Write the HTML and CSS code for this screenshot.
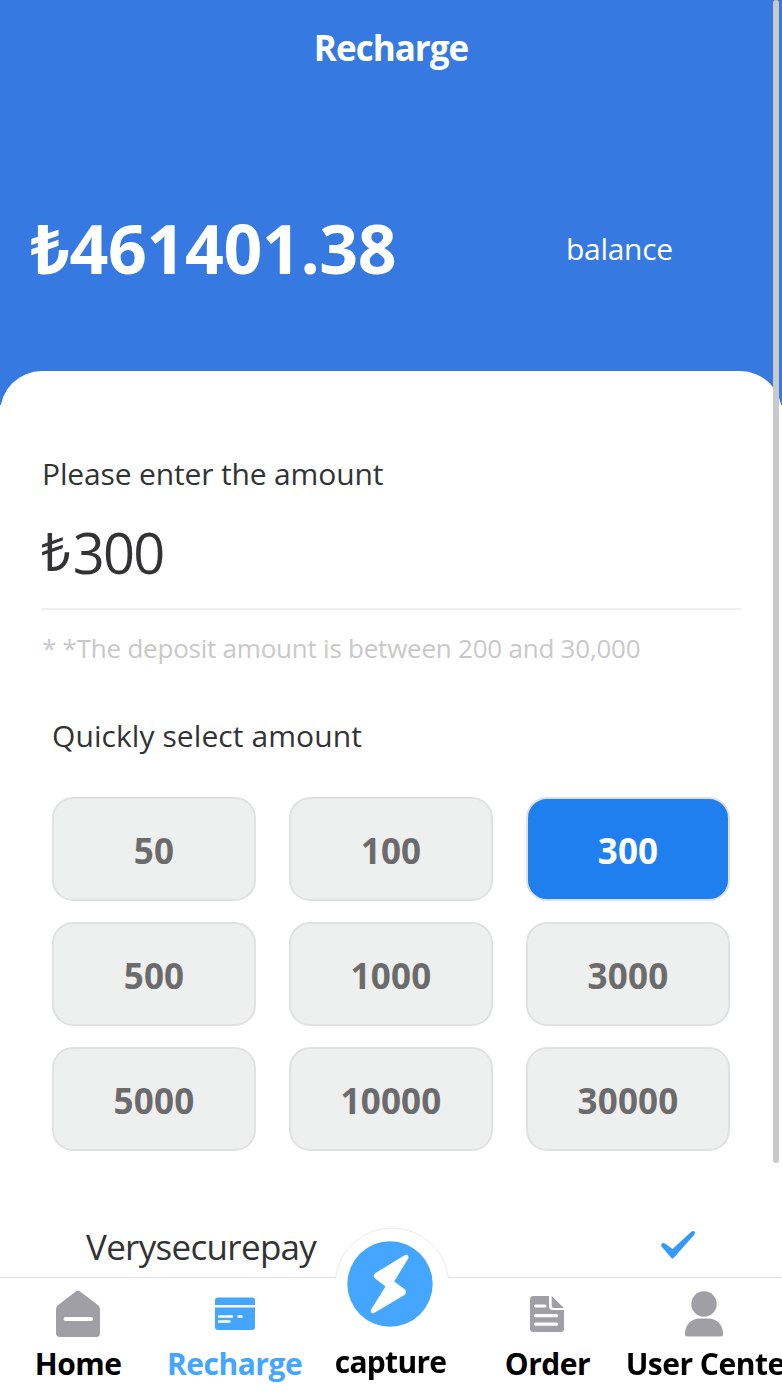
FILE: index.html
```html
<!DOCTYPE html>
<html lang="en">
<head>
  <meta charset="UTF-8">
  <title>Recharge</title>
  <link rel="stylesheet" href="styles.css">
</head>
<body>

  <div class="page">

    <div class="header">
      <h1 class="title">Recharge</h1>
      <div class="wallet">
        <span class="money">₺461401.38</span>
        <span class="wallet-label">balance</span>
      </div>
    </div>

    <div class="card">
      <p class="label">Please enter the amount</p>
      <div class="amount"><span class="currency">₺</span><span class="value">300</span></div>
      <p class="note">* *The deposit amount is between 200 and 30,000</p>

      <p class="quick-label">Quickly select amount</p>
      <div class="quick">
        <div class="option">50</div>
        <div class="option">100</div>
        <div class="option active">300</div>
        <div class="option">500</div>
        <div class="option">1000</div>
        <div class="option">3000</div>
        <div class="option">5000</div>
        <div class="option">10000</div>
        <div class="option">30000</div>
      </div>

      <div class="channel">
        <span class="channel-name">Verysecurepay</span>
        <svg class="check" width="36" height="30" viewBox="0 0 36 30">
          <path d="M1 14 Q2 11 5 12.500 L12.500 18 L31 1 Q34 -1 35 1.500 L34.500 3.500 L14 26.500 Q12.500 28.500 11 26.500 L1.500 15.500 Z" fill="#3499fb"/>
        </svg>
      </div>
    </div>

  </div>

  <div class="scrollbar"></div>

  <div class="tabbar">
    <svg class="bump" width="116" height="52" viewBox="0 0 116 52">
      <path d="M1 52 L1.500 50.500 A57 57 0 0 1 114.500 50.500 L115 52" fill="#fff" stroke="#e9e9e9" stroke-width="1"/>
    </svg>

    <div class="tab">
      <svg class="icon" width="48" height="48" viewBox="0 0 48 48">
        <path d="M21.500 1.800 Q24 -0.200 26.500 1.800 L44.500 15.500 Q46 17 46 19 V43 Q46 47 42 47 H6 Q2 47 2 43 V19 Q2 17 3.500 15.500 Z" fill="#a19fa6"/>
        <path d="M11.500 29 H37" stroke="#fff" stroke-width="4" stroke-linecap="round"/>
      </svg>
      <span class="tab-name">Home</span>
    </div>

    <div class="tab selected">
      <svg class="icon" width="48" height="48" viewBox="0 0 48 48">
        <path d="M4 15 V10.500 Q4 7.500 7 7.500 H41 Q44 7.500 44 10.500 V15 Z" fill="#45a6ff"/>
        <path d="M4 17.500 H44 V37 Q44 40 41 40 H7 Q4 40 4 37 Z" fill="#45a6ff"/>
        <path d="M8 26.500 H21 M27.500 26.500 H30.500 M8 31.500 H18.500" stroke="#fff" stroke-width="2.400" stroke-linecap="round"/>
      </svg>
      <span class="tab-name">Recharge</span>
    </div>

    <div class="tab middle">
      <svg class="bolt" width="86" height="86" viewBox="0 0 86 86">
        <circle cx="43" cy="43" r="42.700" fill="#45a6ff"/>
        <path d="M58 14 Q61.500 12.500 61.500 17 L47.200 40.500 L58 48.500 Q60.500 51 57.500 54 L27 72 Q23.500 73 23.800 69 L38.500 45.500 L27.500 37 Q25.500 34 28.500 32 Z" fill="#fff"/>
      </svg>
      <span class="tab-name">capture</span>
    </div>

    <div class="tab">
      <svg class="icon" width="48" height="48" viewBox="0 0 48 48">
        <path d="M10.500 6 H26 V16 Q26 20 30 20 H41 V38.500 Q41 42 37.500 42 H10.500 Q7 42 7 38.500 V9.500 Q7 6 10.500 6 Z" fill="#a19fa6"/>
        <path d="M28.700 6 L41 18 H30.500 Q28.700 18 28.700 16 Z" fill="#a19fa6"/>
        <path d="M12.500 16 H22 M12.500 25.700 H33.500 M12.500 34.200 H33.500" stroke="#fff" stroke-width="3.200" stroke-linecap="round"/>
      </svg>
      <span class="tab-name">Order</span>
    </div>

    <div class="tab">
      <svg class="icon" width="48" height="48" viewBox="0 0 48 48">
        <circle cx="24" cy="14" r="12.700" fill="#a19fa6"/>
        <path d="M5 44 C5 34 12 28.500 20 28.500 H28 C36 28.500 43 34 43 44 Q43 46.500 40.500 46.500 H7.500 Q5 46.500 5 44 Z" fill="#a19fa6"/>
      </svg>
      <span class="tab-name">User Center</span>
    </div>
  </div>

</body>
</html>
```
FILE: styles.css
```css
html, body {
  height: 100%;
  overflow: hidden;
}

body {
  margin: 0;
  background-color: #fff;
  color: #323335;
  font-family: "Open Sans", "Noto Sans", sans-serif;
}

h1, p {
  margin: 0;
}

.header {
  height: 405px;
  background-color: #3579e1;
  color: #fff;
}

.title {
  padding-top: 23px;
  font-size: 35px;
  letter-spacing: -1px;
  line-height: 50px;
  text-align: center;
}

.wallet {
  display: flex;
  align-items: center;
  height: 100px;
  margin-top: 125px;
  padding-left: 31px;
}

.money {
  width: 536px;
  margin-top: -2px;
  font-size: 68px;
  font-weight: bold;
  letter-spacing: -0.4px;
}

.wallet-label {
  margin-left: -1px;
  font-size: 30px;
  letter-spacing: -0.3px;
}

.card {
  height: 1021px;
  box-sizing: border-box;
  margin-top: -34px;
  padding: 83px 41px 0;
  border-radius: 42px 42px 0 0;
  background-color: #fff;
}

.label,
.quick-label {
  font-size: 30px;
  line-height: 40px;
}

.label {
  padding-left: 1px;
  letter-spacing: -0.15px;
}

.amount {
  height: 114px;
  border-bottom: 2px solid #efefef;
  font-size: 56px;
  line-height: 113px;
}

.currency {
  font-size: 52px;
  vertical-align: 3px;
}

.value {
  margin-left: 2px;
  letter-spacing: -1.8px;
}

.note {
  padding: 18px 0 0 1px;
  color: #c9c9c9;
  font-size: 26px;
  letter-spacing: -0.23px;
  line-height: 40px;
}

.quick-label {
  margin: 48px 0 0 11px;
  letter-spacing: 0.08px;
}

.quick {
  display: grid;
  grid-template-columns: repeat(3, 204px);
  justify-content: space-between;
  row-gap: 21px;
  margin: 41px 11px 0;
}

.option {
  height: 104px;
  box-sizing: border-box;
  border: 2px solid #e0e2e1;
  border-radius: 21px;
  background-color: #eef0ef;
  color: #6b6b6b;
  font-size: 35px;
  font-weight: bold;
  letter-spacing: 0.2px;
  line-height: 104px;
  text-align: center;
}

.option.active {
  background-color: #1f7fee;
  color: #fff;
}

.channel {
  display: flex;
  align-items: center;
  justify-content: space-between;
  height: 60px;
  margin-top: 65px;
  padding: 0 45px;
}

.channel-name {
  font-size: 35px;
  letter-spacing: -0.7px;
}

.scrollbar {
  position: fixed;
  top: 0;
  right: 3px;
  width: 6px;
  height: 1163px;
  border-radius: 3px;
  background-color: #c9c9c9;
}

/* bottom navigation */
.tabbar {
  position: fixed;
  left: 0;
  bottom: 0;
  width: 100%;
  height: 115px;
  box-sizing: border-box;
  display: flex;
  border-top: 1px solid #dfdfdf;
  background-color: #fff;
  color: #000;
}

.bump {
  position: absolute;
  top: -51px;
  left: 334px;
}

.tab {
  flex: 1 1 0;
  min-width: 0;
  display: flex;
  flex-direction: column;
  padding-top: 12px;
}

.icon {
  align-self: center;
}

.tab-name {
  margin-top: 6px;
  font-size: 30px;
  font-weight: bold;
  letter-spacing: -0.5px;
  line-height: 40px;
  text-align: center;
  white-space: nowrap;
}

.selected {
  color: #45a6ff;
}

.middle {
  position: relative;
  padding-top: 0;
}

.bolt {
  align-self: center;
  margin: -37px 2px 0 0;
}

.middle .tab-name {
  margin: 15px 1px 0 0;
  letter-spacing: -0.7px;
}
```
